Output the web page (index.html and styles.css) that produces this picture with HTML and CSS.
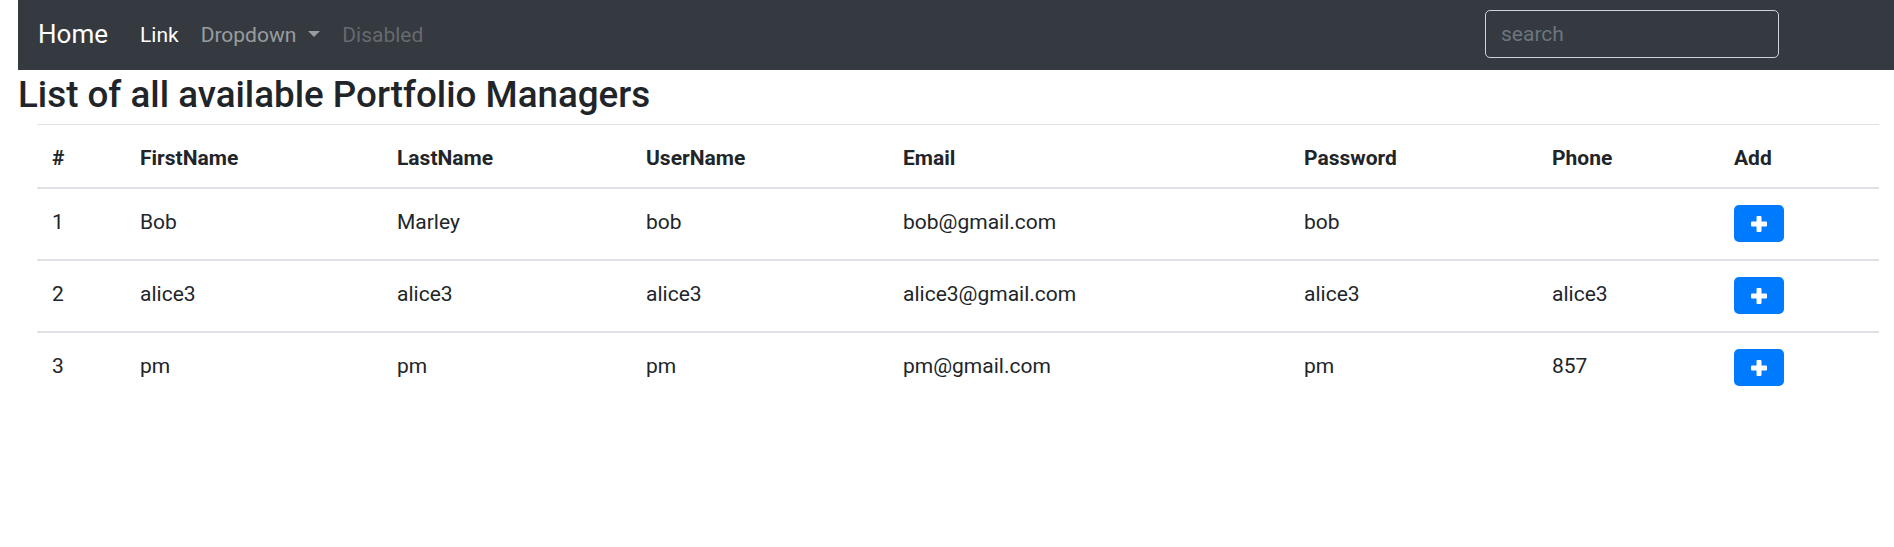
FILE: index.html
```html
<!DOCTYPE html>
<html lang="en">
<head>
<meta charset="utf-8">
<title>Portfolio Managers</title>
<link rel="stylesheet" href="styles.css">
</head>
<body>
<div class="page">
  <nav class="navbar">
    <a class="brand" href="#">Home</a>
    <ul class="nav">
      <li><a class="nav-link active" href="#">Link</a></li>
      <li><a class="nav-link dropdown" href="#">Dropdown</a></li>
      <li><span class="nav-link disabled">Disabled</span></li>
    </ul>
    <input class="search" type="text" placeholder="search">
  </nav>
  <h3 class="title">List of all available Portfolio Managers</h3>
  <div class="table-wrap">
    <table class="table">
      <colgroup>
        <col class="c1"><col class="c2"><col class="c3"><col class="c4"><col class="c5"><col class="c6"><col class="c7"><col class="c8">
      </colgroup>
      <thead>
        <tr><th>#</th><th>FirstName</th><th>LastName</th><th>UserName</th><th>Email</th><th>Password</th><th>Phone</th><th>Add</th></tr>
      </thead>
      <tbody>
        <tr><td>1</td><td>Bob</td><td>Marley</td><td>bob</td><td>bob@gmail.com</td><td>bob</td><td></td><td class="add"><button class="btn-add" type="button"><svg viewBox="0 0 16 16" width="16" height="16"><rect x="5.5" y="0" width="5" height="16" rx="1"/><rect x="0" y="5.5" width="16" height="5" rx="1"/></svg></button></td></tr>
        <tr><td>2</td><td>alice3</td><td>alice3</td><td>alice3</td><td>alice3@gmail.com</td><td>alice3</td><td>alice3</td><td class="add"><button class="btn-add" type="button"><svg viewBox="0 0 16 16" width="16" height="16"><rect x="5.5" y="0" width="5" height="16" rx="1"/><rect x="0" y="5.5" width="16" height="5" rx="1"/></svg></button></td></tr>
        <tr><td>3</td><td>pm</td><td>pm</td><td>pm</td><td>pm@gmail.com</td><td>pm</td><td>857</td><td class="add"><button class="btn-add" type="button"><svg viewBox="0 0 16 16" width="16" height="16"><rect x="5.5" y="0" width="5" height="16" rx="1"/><rect x="0" y="5.5" width="16" height="5" rx="1"/></svg></button></td></tr>
      </tbody>
    </table>
  </div>
</div>
</body>
</html>
```

FILE: styles.css
```css
* { box-sizing: border-box; }
html, body { margin: 0; padding: 0; background: #fff; }
body {
  font-family: Roboto, "Liberation Sans", Arial, sans-serif;
  font-size: 21px;
  line-height: 30px;
  color: #212529;
}
.page { padding-left: 18px; }

.navbar {
  display: flex;
  align-items: center;
  height: 70px;
  background: #343a40;
  padding: 0 20px;
}
.brand {
  font-size: 26px;
  line-height: 37.5px;
  color: #fff;
  text-decoration: none;
  margin-right: 21px;
}
.nav {
  display: flex;
  list-style: none;
  margin: 0;
  padding: 0;
}
.nav-link {
  display: block;
  padding: 0 11px;
  line-height: 30px;
  color: rgba(255,255,255,.5);
  text-decoration: none;
}
.nav-link.active { color: #fff; }
.nav-link.disabled { color: rgba(255,255,255,.25); }
.nav-link.dropdown::after {
  content: "";
  display: inline-block;
  margin-left: 12px;
  vertical-align: 5px;
  border-top: 6px solid;
  border-left: 6px solid transparent;
  border-right: 6px solid transparent;
}
.search {
  margin-left: auto;
  margin-right: 95px;
  margin-bottom: 3px;
  width: 294px;
  height: 48px;
  padding: 0 15px;
  font-family: inherit;
  font-size: 21px;
  color: #fff;
  background: transparent;
  border: 1px solid #ced4da;
  border-radius: 5px;
  outline: none;
}
.search::placeholder { color: #6c757d; }

.title {
  margin: 4px 0 8px;
  font-size: 36.75px;
  line-height: 42px;
  font-weight: 500;
}

.table-wrap { padding: 0 15px 0 19px; }
.table {
  width: 100%;
  border-collapse: collapse;
  table-layout: fixed;
}
.c1 { width: 88px; }
.c2 { width: 257px; }
.c3 { width: 249px; }
.c4 { width: 257px; }
.c5 { width: 401px; }
.c6 { width: 248px; }
.c7 { width: 182px; }
.c8 { width: auto; }
.table th {
  text-align: left;
  font-weight: 700;
  padding: 18px 15px 14px;
  border-top: 1px solid #dee2e6;
  border-bottom: 2px solid #dee2e6;
}
.table td {
  padding: 18px 15px 22px;
  vertical-align: top;
}
.table tbody tr + tr td { border-top: 2px solid #dee2e6; }
.table td.add { padding: 16px 15px 17px; }
.btn-add {
  display: flex;
  align-items: center;
  justify-content: center;
  width: 50px;
  height: 37px;
  padding: 0;
  border: none;
  border-radius: 5px;
  background: #007bff;
  fill: #fff;
}
```
